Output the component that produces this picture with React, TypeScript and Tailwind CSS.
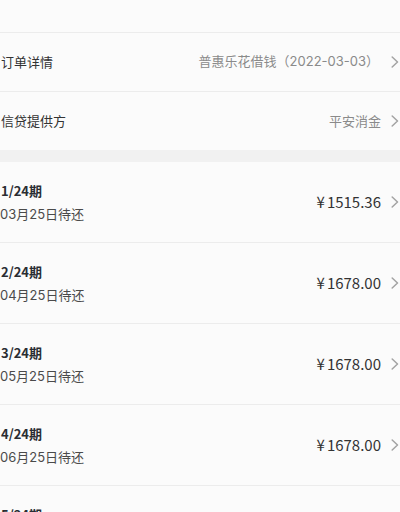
import React from "react";

const Chevron = () => (
  <svg width="8" height="12" viewBox="0 0 8 12" className="shrink-0" fill="none">
    <path d="M1.2 1 L6.5 6 L1.2 11" stroke="#a3a3a3" strokeWidth="1.5" strokeLinecap="round" strokeLinejoin="round" />
  </svg>
);

const items = [
  { t: "1/24期", d: "03月25日待还", a: "1515.36" },
  { t: "2/24期", d: "04月25日待还", a: "1678.00" },
  { t: "3/24期", d: "05月25日待还", a: "1678.00" },
  { t: "4/24期", d: "06月25日待还", a: "1678.00" },
  { t: "5/24期", d: "07月25日待还", a: "1678.00" },
];

const mixed = { fontFamily: 'Inter, "Noto Sans CJK SC", sans-serif' };

export default function App() {
  return (
    <div
      className="w-[400px] h-[512px] overflow-hidden bg-[#fbfbfb]"
      style={{ fontFamily: '"Noto Sans CJK SC", "Noto Sans", sans-serif' }}
    >
      <div className="h-[33px] border-b border-[#ececec]" />
      <div className="h-[59px] border-b border-[#ececec] flex items-center justify-between pl-[1px] pr-[1px]">
        <span className="text-[13px] text-[#333]">订单详情</span>
        <div className="flex items-center gap-[12px]">
          <span className="text-[13px] text-[#8a8a8a]" style={mixed}>普惠乐花借钱（2022-03-03）</span>
          <Chevron />
        </div>
      </div>
      <div className="h-[58px] flex items-center justify-between pl-[1px] pr-[1px]">
        <span className="text-[13px] text-[#333]">信贷提供方</span>
        <div className="flex items-center gap-[10px]">
          <span className="text-[13px] text-[#8a8a8a]">平安消金</span>
          <Chevron />
        </div>
      </div>
      <div className="h-[12px] bg-[#f1f1f1]" />
      {items.map((it) => (
        <div
          key={it.t}
          className="h-[81px] border-b border-[#ececec] flex items-center justify-between pl-[1px] pr-[1px]"
        >
          <div className="flex flex-col">
            <span className="text-[13px] leading-[20px] font-semibold text-[#2a2d33]">{it.t}</span>
            <span className="text-[13px] leading-[20px] mt-[3px] text-[#4a4a4a] -ml-[1px]" style={mixed}>{it.d}</span>
          </div>
          <div className="flex items-center gap-[10px]">
            <span className="text-[15px] text-[#333]">
              <span className="mr-[2px]">¥</span>
              {it.a}
            </span>
            <Chevron />
          </div>
        </div>
      ))}
    </div>
  );
}
